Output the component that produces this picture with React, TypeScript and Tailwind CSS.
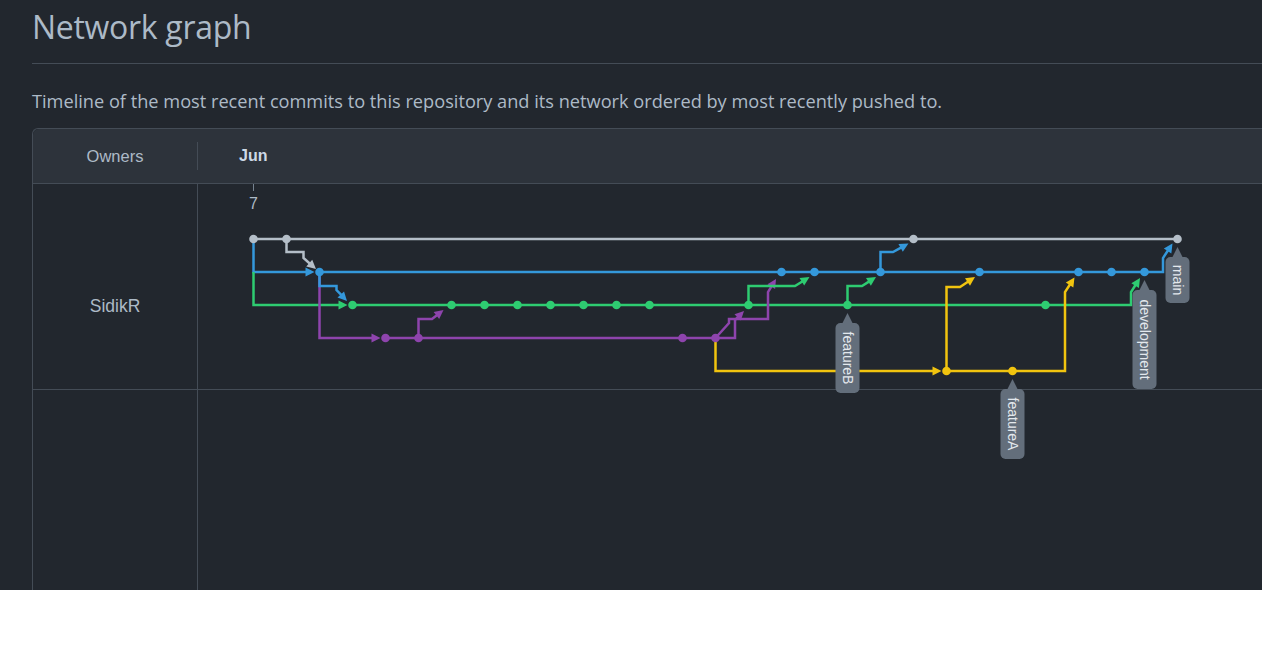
import React from 'react';

const BLUE = '#3498db';
const GREEN = '#2ecc71';
const PURPLE = '#8e44ad';
const YELLOW = '#f1c40f';
const GRAY = '#b4bec8';

type Pt = [number, number];

const X = (c: number) => 253.5 + 33 * c;
const Y = [239, 272, 305, 338, 371];

const COMMITS: { row: number; color: string; cols: number[] }[] = [
  { row: 0, color: GRAY, cols: [0, 1, 20, 28] },
  { row: 1, color: BLUE, cols: [2, 16, 17, 19, 22, 25, 26, 27] },
  { row: 2, color: GREEN, cols: [3, 6, 7, 8, 9, 10, 11, 12, 15, 18, 24] },
  { row: 3, color: PURPLE, cols: [4, 5, 13, 14] },
  { row: 4, color: YELLOW, cols: [21, 23] },
];

// plain lines
const LINES: { pts: Pt[]; color: string }[] = [
  { color: GRAY, pts: [[X(0), Y[0]], [X(28), Y[0]]] },
  { color: PURPLE, pts: [[X(4), Y[3]], [X(14), Y[3]]] },
];

// lines that end in an arrow head
const ARROWS: { pts: Pt[]; color: string }[] = [
  { color: BLUE, pts: [[X(0), Y[0]], [X(0), Y[1]], [X(2) - 5, Y[1]]] },
  { color: GREEN, pts: [[X(0), Y[1]], [X(0), Y[2]], [X(3) - 5, Y[2]]] },
  { color: PURPLE, pts: [[X(2), Y[1]], [X(2), Y[3]], [X(4) - 5, Y[3]]] },
  { color: YELLOW, pts: [[X(14), Y[3]], [X(14), Y[4]], [X(21) - 5, Y[4]]] },
  { color: GRAY, pts: [[X(1), Y[0]], [X(1), 252], [303.5, 252], [303.5, 258], [316, 269]] },
  { color: BLUE, pts: [[X(2), Y[1]], [X(2), 286], [336.5, 286], [336.5, 290], [347, 301]] },
  { color: BLUE, pts: [[X(2), Y[1]], [1163, Y[1]], [1163, 258], [1172.5, 243.5]] },
  { color: GREEN, pts: [[X(3), Y[2]], [1131, Y[2]], [1131, 292], [1140, 278]] },
  { color: PURPLE, pts: [[X(5), Y[3]], [X(5), 319], [432, 319], [443.5, 310]] },
  { color: PURPLE, pts: [[X(14), Y[3]], [735, Y[3]], [735, 320], [744, 311]] },
  { color: PURPLE, pts: [[X(14), Y[3]], [729, 323], [729, 319], [768, 319], [768, 292], [776, 279]] },
  { color: GREEN, pts: [[X(15), Y[2]], [X(15), 286], [795, 286], [809.5, 277]] },
  { color: GREEN, pts: [[X(18), Y[2]], [X(18), 286], [862, 286], [876, 277]] },
  { color: BLUE, pts: [[X(19), Y[1]], [X(19), 252], [893, 252], [908.5, 243.5]] },
  { color: YELLOW, pts: [[X(21), Y[4]], [X(21), 287], [960, 287], [975, 277]] },
  { color: YELLOW, pts: [[X(21), Y[4]], [1065, Y[4]], [1065, 292], [1074.5, 277.5]] },
];

const LABELS = [
  { col: 18, row: 2, text: 'featureB', h: 70 },
  { col: 23, row: 4, text: 'featureA', h: 70 },
  { col: 27, row: 1, text: 'development', h: 99 },
  { col: 28, row: 0, text: 'main', h: 46 },
];

const toD = (pts: Pt[]) => pts.map((p, i) => `${i ? 'L' : 'M'}${p[0]} ${p[1]}`).join(' ');

function ArrowLine({ pts, color }: { pts: Pt[]; color: string }) {
  const [tx, ty] = pts[pts.length - 1];
  const [px, py] = pts[pts.length - 2];
  const a = Math.atan2(ty - py, tx - px);
  const len = 9;
  const hw = 4.5;
  const bx = tx - len * Math.cos(a);
  const by = ty - len * Math.sin(a);
  const lx = bx - hw * Math.sin(a);
  const ly = by + hw * Math.cos(a);
  const rx = bx + hw * Math.sin(a);
  const ry = by - hw * Math.cos(a);
  const line = [...pts.slice(0, -1), [bx + Math.cos(a), by + Math.sin(a)] as Pt];
  return (
    <g>
      <path d={toD(line)} stroke={color} strokeWidth={2.5} fill="none" strokeLinejoin="miter" />
      <polygon points={`${tx},${ty} ${lx},${ly} ${rx},${ry}`} fill={color} />
    </g>
  );
}

function Graph() {
  return (
    <svg
      className="absolute top-0 left-0"
      width={1064}
      height={406}
      viewBox="198 184 1064 406"
    >
      <line x1={253.5} y1={184} x2={253.5} y2={191} stroke="#768390" strokeWidth={1} />
      <text x={253.5} y={209} textAnchor="middle" fontSize={16} fill="#adbac7" fontFamily="'Liberation Sans', Arial, sans-serif">
        7
      </text>

      {LINES.map((l, i) => (
        <path key={i} d={toD(l.pts)} stroke={l.color} strokeWidth={2.5} fill="none" />
      ))}
      {ARROWS.map((l, i) => (
        <ArrowLine key={i} pts={l.pts} color={l.color} />
      ))}
      {COMMITS.map((r) =>
        r.cols.map((c) => <circle key={`${r.row}-${c}`} cx={X(c)} cy={Y[r.row]} r={4.3} fill={r.color} />)
      )}

      {LABELS.map((l) => {
        const x = X(l.col);
        const tip = Y[l.row] + 8;
        const top = tip + 10;
        return (
          <g key={l.text}>
            <polygon points={`${x - 6},${tip + 12} ${x},${tip} ${x + 6},${tip + 12}`} fill="#636e7b" />
            <rect x={x - 12} y={top} width={24} height={l.h} rx={5} fill="#636e7b" />
            <text
              transform={`translate(${x} ${top + l.h / 2}) rotate(90)`}
              textAnchor="middle"
              dominantBaseline="central"
              fontSize={14}
              fill="#e3e8ed"
              fontFamily="'Liberation Sans', Arial, sans-serif"
            >
              {l.text}
            </text>
          </g>
        );
      })}
    </svg>
  );
}

export default function App() {
  return (
    <div className="h-[590px] overflow-hidden bg-[#22272e] font-['Open_Sans',sans-serif]">
      <div className="pl-8">
        <div className="h-[64px] border-b border-[#444c56] pt-[5px]">
          <h2 className="text-[32px] leading-[44px] tracking-[-0.3px] text-[#adbac7]">Network graph</h2>
        </div>
        <p className="mt-[24px] text-[18.2px] leading-[26px] text-[#adbac7]">
          Timeline of the most recent commits to this repository and its network ordered by most recently pushed to.
        </p>
        <div className="mt-[14px] w-[1300px] rounded-tl-md border-t border-l border-[#444c56] font-['Liberation_Sans',Arial,sans-serif]">
          <div className="flex h-[55px] items-center border-b border-[#444c56] bg-[#2d333b] rounded-tl-md">
            <div className="w-[164px] text-center text-[16.5px] text-[#adbac7]">Owners</div>
            <div className="h-[28px] w-px bg-[#444c56]" />
            <div className="pl-[41px] text-[16px] font-bold text-[#cdd9e5]">Jun</div>
          </div>
          <div className="grid grid-cols-[165px_1fr]">
            <div className="flex flex-col">
              <div className="h-[206px] border-r border-b border-[#444c56] pt-[109px] text-center text-[17.5px] text-[#adbac7]">
                SidikR
              </div>
              <div className="h-[220px] border-r border-[#444c56]" />
            </div>
            <div className="relative flex flex-col">
              <div className="h-[206px] border-b border-[#444c56]" />
              <div className="h-[220px]" />
              <Graph />
            </div>
          </div>
        </div>
      </div>
    </div>
  );
}
